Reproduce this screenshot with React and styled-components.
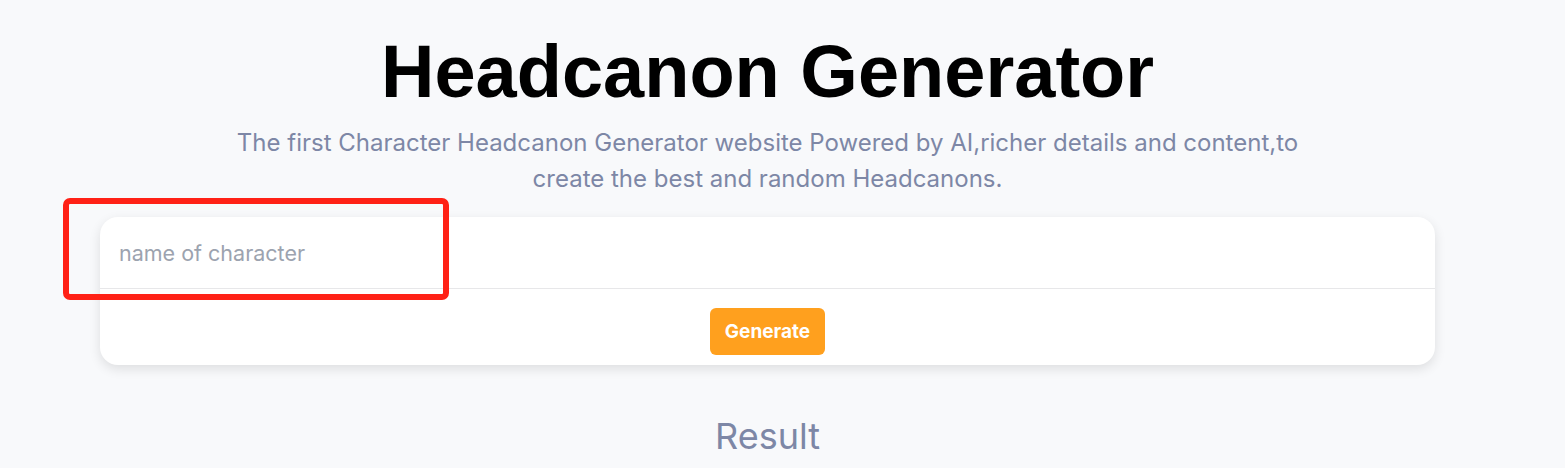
import React, { useState } from 'react';
import styled, { createGlobalStyle } from 'styled-components';

const GlobalStyle = createGlobalStyle`
  html, body {
    margin: 0;
    padding: 0;
    background: #f8f9fb;
  }
  body {
    font-family: Inter, "Noto Sans", sans-serif;
  }
`;

const Page = styled.main`
  width: 1535px;
  height: 468px;
  overflow: hidden;
  display: flex;
  flex-direction: column;
  align-items: center;
  padding-top: 32px;
  box-sizing: border-box;
`;

const Title = styled.h1`
  margin: 0;
  font-family: "Liberation Sans", Arial, sans-serif;
  font-weight: 700;
  font-size: 74px;
  line-height: 80px;
  color: #000;
`;

const Subtitle = styled.p`
  margin: 13px 0 0;
  max-width: 1090px;
  text-align: center;
  font-size: 24px;
  line-height: 36px;
  color: #7d87a6;
`;

const CardWrap = styled.div`
  position: relative;
  align-self: stretch;
  margin: 20px 100px 0;
`;

const Card = styled.form`
  background: #fff;
  border-radius: 18px;
  box-shadow: 0 4px 12px rgba(0, 0, 0, 0.11);
  overflow: hidden;
`;

const NameInput = styled.input`
  display: block;
  width: 100%;
  box-sizing: border-box;
  height: 72px;
  padding: 0 19px;
  border: none;
  border-bottom: 1px solid #e7e7e9;
  outline: none;
  font-family: Inter, sans-serif;
  font-size: 21.5px;
  color: #333;
  background: transparent;

  &::placeholder {
    color: #9ca3af;
  }
`;

const Actions = styled.div`
  display: flex;
  justify-content: center;
  padding: 19px 0 10px;
`;

const GenerateButton = styled.button`
  width: 115px;
  height: 47px;
  border: none;
  border-radius: 6px;
  background: #ffa01e;
  color: #fff;
  font-family: Inter, sans-serif;
  font-weight: 700;
  font-size: 19px;
  cursor: pointer;
`;

const Highlight = styled.div`
  position: absolute;
  left: -37px;
  top: -19px;
  width: 386px;
  height: 102px;
  box-sizing: border-box;
  border: 6px solid #ff2116;
  border-radius: 7px;
  pointer-events: none;
`;

const ResultHeading = styled.h2`
  margin: 49px 0 0;
  font-weight: 400;
  font-size: 36px;
  line-height: 44px;
  color: #7d87a6;
`;

export default function App() {
  const [name, setName] = useState('');

  return (
    <>
      <GlobalStyle />
      <Page>
        <Title>Headcanon Generator</Title>
        <Subtitle>
          The first Character Headcanon Generator website Powered by AI,richer details and content,to
          create the best and random Headcanons.
        </Subtitle>
        <CardWrap>
          <Card onSubmit={(e) => e.preventDefault()}>
            <NameInput
              placeholder="name of character"
              value={name}
              onChange={(e) => setName(e.target.value)}
            />
            <Actions>
              <GenerateButton type="submit">Generate</GenerateButton>
            </Actions>
          </Card>
          <Highlight />
        </CardWrap>
        <ResultHeading>Result</ResultHeading>
      </Page>
    </>
  );
}
